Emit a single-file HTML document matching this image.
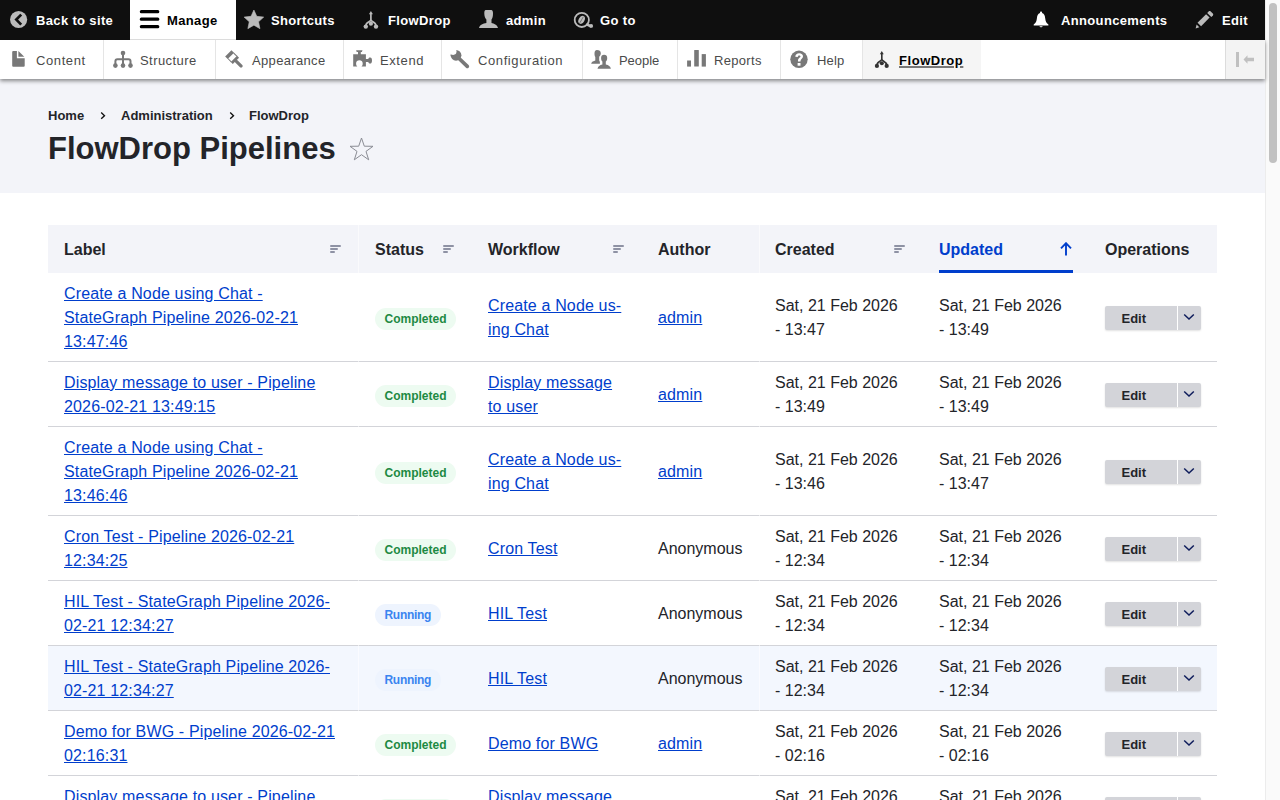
<!DOCTYPE html>
<html><head><meta charset="utf-8">
<style>
*{box-sizing:border-box;margin:0;padding:0}
html,body{width:1280px;height:800px;overflow:hidden;background:#fff}
body{font-family:"Liberation Sans",sans-serif;color:#232429;position:relative}
.abs{position:absolute}
#bar{position:absolute;z-index:10;left:0;top:0;width:1265px;height:40px;background:#0f0f0f}
#bar .t{position:absolute;top:11px;line-height:20px;font-size:13px;font-weight:700;color:#fff;white-space:nowrap;letter-spacing:.35px}
#bar svg{position:absolute}
#manage{position:absolute;left:130px;top:0;width:106px;height:40px;background:#fff;border-bottom:1px solid #dcdcdc}
#tray{position:absolute;z-index:5;left:0;top:40px;width:1265px;height:39px;background:#fff;box-shadow:0 2px 4px rgba(0,0,0,.45)}
#tray .t{position:absolute;top:11px;line-height:20px;font-size:13px;color:#4a4a4a;white-space:nowrap;letter-spacing:.6px}
#tray .d{position:absolute;top:0;width:1px;height:39px;background:#e5e5e5}
#tray svg{position:absolute}
#hdr{position:absolute;left:0;top:79px;width:1265px;height:114px;background:#f3f4f9}
.bc{position:absolute;top:26.5px;line-height:20px;font-size:13px;font-weight:700;color:#232429;white-space:nowrap}
h1{position:absolute;left:48px;top:129px;line-height:40px;font-size:31px;font-weight:700;color:#232429;white-space:nowrap}
#sb{position:absolute;left:1265px;top:0;width:15px;height:800px;background:#fafafa;border-left:1px solid #ececec}
#sb div{position:absolute;left:3px;top:3px;width:8px;height:160px;border-radius:4px;background:#c1c1c1}
table{position:absolute;left:48px;top:225px;width:1169px;border-collapse:collapse;table-layout:fixed}
th{height:48px;background:#f3f4f9;text-align:left;font-size:16px;font-weight:700;line-height:24px;padding:1px 16px 0;vertical-align:middle;position:relative;white-space:nowrap}
td{font-size:16px;line-height:24px;padding:9px 16px 7px;vertical-align:middle;border-bottom:1px solid #d3d4d9}
a{color:#003ecc;text-decoration:underline;text-underline-offset:1px;letter-spacing:.15px}
tr.hov td{background:#f3f7fe}
.srt{position:absolute;top:20px;right:18px;width:11px;height:8px}
.srt i{position:absolute;left:0;height:2px;background:#8e92a4;border-radius:1px}
.badge{display:inline-block;height:22px;line-height:22px;padding:0 9.5px;border-radius:11px;font-size:12px;font-weight:700;vertical-align:middle}
.ok{background:#edfbf1;color:#1d8a43}
.run{background:#eef4fe;color:#3a84f0;letter-spacing:-.3px}
.ops{position:relative;width:96px;height:24px;background:#d3d4d9;border-radius:2px;box-shadow:0 1px 2px rgba(0,0,0,.12);font-size:13px;font-weight:700;line-height:24px}
.ops span{position:absolute;left:16.5px;top:1px}
.ops i{position:absolute;left:72px;top:0;width:1px;height:24px;background:#fff}
.ops svg{position:absolute;left:78px;top:7px}
</style></head><body>
<div id="bar">
  <!-- back to site -->
  <svg style="left:8px;top:9px" width="22" height="22" viewBox="8 9 22 22"><circle cx="18.6" cy="19.5" r="8.6" fill="#bbb"/><path d="M21.2 14.6 L16.3 19.6 L21.2 24.6" stroke="#0f0f0f" stroke-width="2.7" fill="none"/></svg>
  <span class="t" style="left:36px">Back to site</span>
  <div id="manage"></div>
  <svg style="left:138px;top:8px" width="24" height="24" viewBox="138 8 24 24"><rect x="139.8" y="10" width="19.5" height="3.2" rx="1.5" fill="#000"/><rect x="139.8" y="17.5" width="19.5" height="3.2" rx="1.5" fill="#000"/><rect x="139.8" y="25" width="19.5" height="3.2" rx="1.5" fill="#000"/></svg>
  <span class="t" style="left:167px;color:#000">Manage</span>
  <svg style="left:242px;top:8px" width="24" height="24" viewBox="242 8 24 24"><path d="M253.90 10.00 L256.78 16.34 L263.70 17.12 L258.56 21.81 L259.95 28.63 L253.90 25.20 L247.85 28.63 L249.24 21.81 L244.10 17.12 L251.02 16.34Z" fill="#bbb" stroke="#bbb" stroke-width="0.6" stroke-linejoin="round"/></svg>
  <span class="t" style="left:271px">Shortcuts</span>
  <svg style="left:360px;top:8px" width="22" height="24" viewBox="360 8 22 24"><g transform="translate(363.6 11.1) scale(1.0)"><path d="M7.3 2 V9.3" stroke="#bbb" stroke-width="1.7"/><path d="M5.3 3.2 L7.3 0 L9.3 3.2Z" fill="#bbb"/><path d="M7.3 8.6 C7.3 10.8 2.3 10.6 2.3 14.5 M7.3 8.6 C7.3 10.8 12.3 10.6 12.3 14.5" stroke="#bbb" stroke-width="1.7" fill="none"/><circle cx="7.3" cy="12.6" r="2.1" fill="#bbb"/><circle cx="2.2" cy="15.5" r="2.2" fill="#bbb"/><circle cx="12.4" cy="15.5" r="2.2" fill="#bbb"/></g></svg>
  <span class="t" style="left:388px">FlowDrop</span>
  <svg style="left:476px;top:8px" width="24" height="24" viewBox="476 8 24 24"><path d="M485.8 10 H491.2 C492.5 10 493 11.5 493 13.5 C493 16.5 492.4 18.3 491.5 19.4 V23 C494 23.6 497 24.5 498 28 H479 C480 24.5 483 23.6 486.4 23 V19.4 C485.3 18.3 484.3 16.5 484.3 13.5 C484.3 11.5 484.6 10 485.8 10Z" fill="#bbb"/></svg>
  <span class="t" style="left:506px">admin</span>
  <svg style="left:570px;top:8px" width="26" height="24" viewBox="570 8 26 24"><circle cx="581.8" cy="19.9" r="7.1" stroke="#bbb" stroke-width="1.8" fill="none"/><path d="M587.2 24.6 L590.8 26.2" stroke="#bbb" stroke-width="2.6" stroke-linecap="round"/><circle cx="591.2" cy="25.9" r="1.9" fill="#bbb"/><ellipse cx="581.6" cy="19.8" rx="4.3" ry="2.9" transform="rotate(-62 581.6 19.8)" fill="#bbb"/><path d="M579.9 22.8 L583.3 16.8" stroke="#555" stroke-width="0.7"/></svg>
  <span class="t" style="left:600px">Go to</span>
  <svg style="left:1030px;top:8px" width="22" height="24" viewBox="1030 8 22 24"><path d="M1041 11.6 C1041.9 11.6 1042.1 12.3 1042.1 12.9 C1044.3 13.6 1045 15.8 1045.2 18.3 C1045.5 21.5 1046.2 23 1048.4 24.6 V25.5 H1033.7 V24.6 C1035.9 23 1036.6 21.5 1036.9 18.3 C1037.1 15.8 1037.8 13.6 1040 12.9 C1040 12.3 1040.2 11.6 1041 11.6Z" fill="#fff"/><path d="M1039.5 26.3 H1042.6 C1042.4 27.6 1039.7 27.6 1039.5 26.3Z" fill="#fff"/></svg>
  <span class="t" style="left:1061px">Announcements</span>
  <svg style="left:1192px;top:8px" width="24" height="24" viewBox="1192 8 24 24"><path d="M1197.5 22.8 L1206.1 14.2 L1209.6 17.6 L1201.1 26.2Z" fill="#bbb"/><path d="M1207.2 12.9 L1208.6 11.5 C1209.2 10.9 1210.1 10.9 1210.7 11.5 L1212.8 13.6 C1213.4 14.2 1213.4 15.1 1212.8 15.7 L1211.3 17.1Z" fill="#bbb"/><path d="M1195.6 28.4 L1196.6 24.6 L1199.3 27.3Z" fill="#bbb"/></svg>
  <span class="t" style="left:1222px">Edit</span>
</div>
<div id="tray">
  <svg style="left:10px;top:8px" width="18" height="22" viewBox="10 48 18 22"><path d="M12.2 51.9 Q12.2 50.9 13.2 50.9 H16.9 V58.2 H24.7 V65.8 Q24.7 66.8 23.7 66.8 H13.2 Q12.2 66.8 12.2 65.8Z" fill="#787878"/><path d="M18.4 51 L24.3 56.8 H18.4Z" fill="#787878"/></svg>
  <span class="t" style="left:36px">Content</span>
  <div class="d" style="left:103px"></div>
  <svg style="left:111px;top:8px" width="24" height="22" viewBox="111 48 24 22"><circle cx="123" cy="53.1" r="2.3" fill="#787878"/><path d="M123 53.5 V65.6 M115.4 65.6 V61.3 Q115.4 59.3 117.4 59.3 H128.5 Q130.5 59.3 130.5 61.3 V65.6" stroke="#787878" stroke-width="2" fill="none"/><circle cx="115.4" cy="65.6" r="2.3" fill="#787878"/><circle cx="123" cy="65.6" r="2.3" fill="#787878"/><circle cx="130.5" cy="65.6" r="2.3" fill="#787878"/></svg>
  <span class="t" style="left:140px;letter-spacing:0.44px">Structure</span>
  <div class="d" style="left:215px"></div>
  <svg style="left:222px;top:7px" width="24" height="24" viewBox="222 47 24 24"><g transform="translate(228.3 53.3) rotate(-45)"><rect x="-4.45" y="0" width="8.9" height="3.6" fill="#787878"/><rect x="-4.45" y="3.4" width="1" height="5" fill="#787878"/><rect x="3.45" y="3.4" width="1" height="5" fill="#787878"/><rect x="-4.45" y="8" width="8.9" height="2.8" fill="#787878"/><rect x="-1.6" y="10" width="3.2" height="9.6" rx="1.4" fill="#787878"/></g></svg>
  <span class="t" style="left:252px;letter-spacing:0.34px">Appearance</span>
  <div class="d" style="left:343px"></div>
  <svg style="left:350px;top:7px" width="26" height="24" viewBox="350 47 26 24"><path d="M356.1 50.2 H362.5 L361.9 51.9 H360.8 V54.3 H365.9 V59 H368.3 C368.5 57.8 369.3 57.4 370.2 57.4 C371.4 57.4 372 58.6 372 60.4 C372 62.3 371.4 63.5 370.2 63.5 C369.3 63.5 368.5 63 368.3 61.9 H365.9 V66.6 H361.4 C362.4 65.8 362.7 64.7 362.7 63.5 C362.7 61.5 361.3 60.3 359.4 60.3 C357.5 60.3 356.1 61.5 356.1 63.5 C356.1 64.7 356.5 65.8 357.4 66.6 H353.2 V54.3 H358 V51.9 H356.7Z" fill="#787878"/></svg>
  <span class="t" style="left:380px">Extend</span>
  <div class="d" style="left:441px"></div>
  <svg style="left:447px;top:7px" width="26" height="24" viewBox="447 47 26 24"><mask id="wm"><rect x="447" y="47" width="26" height="24" fill="#fff"/><circle cx="453.2" cy="51.6" r="3.3" fill="#000"/></mask><g mask="url(#wm)"><circle cx="456" cy="55.3" r="5.4" fill="#787878"/></g><path d="M457.5 57 L467.3 66.4" stroke="#787878" stroke-width="3.7" stroke-linecap="round"/></svg>
  <span class="t" style="left:478px">Configuration</span>
  <div class="d" style="left:582px"></div>
  <svg style="left:588px;top:7px" width="26" height="24" viewBox="588 47 26 24"><path d="M597 50.1 C599.3 50.1 600.8 51.2 600.8 53.3 C600.8 54.8 600.1 55.9 599.2 56.7 V60.4 C599.7 61.1 599.9 61.8 599.9 62.4 V63.7 H591.2 C591.4 62.4 592.5 61.4 595.3 60.6 V57 C594.6 56 594.5 54.8 594.5 53.5 C594.5 51.5 595.2 50.1 597 50.1Z" fill="#787878"/><path d="M604.1 54.8 C606.1 54.8 607.2 56 607.2 58 C607.2 59.6 606.6 60.9 605.8 61.6 V64.5 C608.7 65.1 610.3 66.2 610.9 68.7 H597.5 C598.1 66.2 599.7 65.1 602.4 64.5 V61.6 C601.6 60.9 601.1 59.6 601.1 58 C601.1 56 602.1 54.8 604.1 54.8Z" fill="#787878"/></svg>
  <span class="t" style="left:619px;letter-spacing:-0.05px">People</span>
  <div class="d" style="left:677px"></div>
  <svg style="left:685px;top:7px" width="24" height="22" viewBox="685 47 24 22"><rect x="687.1" y="60.5" width="3.9" height="6.1" fill="#787878"/><rect x="694.2" y="50.1" width="4.6" height="16.5" rx="0.5" fill="#787878"/><rect x="701.7" y="54.1" width="4.2" height="12.5" fill="#787878"/></svg>
  <span class="t" style="left:714px;letter-spacing:0.31px">Reports</span>
  <div class="d" style="left:780px"></div>
  <svg style="left:788px;top:8px" width="22" height="22" viewBox="788 48 22 22"><circle cx="799" cy="59.3" r="8.7" fill="#787878"/><path d="M795.3 56.8 C795.3 54.6 797 53.3 799.2 53.3 C801.5 53.3 803 54.6 803 56.4 C803 58.6 800.5 58.8 800.5 60.9 V61.6 H798 V60.7 C798 58.2 800.5 57.7 800.5 56.6 C800.5 55.9 800 55.4 799.2 55.4 C798.3 55.4 797.8 56 797.8 56.9Z" fill="#fff"/><rect x="797.6" y="63" width="2.9" height="2.7" fill="#fff"/></svg>
  <span class="t" style="left:817px;letter-spacing:0.16px">Help</span>
  <div class="d" style="left:862px"></div>
  <div style="position:absolute;left:863px;top:0;width:118px;height:39px;background:#f5f5f5"></div>
  <svg style="left:872px;top:8px" width="22" height="22" viewBox="872 48 22 22"><g transform="translate(874.8 51.1) scale(0.96)"><path d="M7.3 2 V9.3" stroke="#333" stroke-width="1.7"/><path d="M5.3 3.2 L7.3 0 L9.3 3.2Z" fill="#333"/><path d="M7.3 8.6 C7.3 10.8 2.3 10.6 2.3 14.5 M7.3 8.6 C7.3 10.8 12.3 10.6 12.3 14.5" stroke="#333" stroke-width="1.7" fill="none"/><circle cx="7.3" cy="12.6" r="2.1" fill="#333"/><circle cx="2.2" cy="15.5" r="2.2" fill="#333"/><circle cx="12.4" cy="15.5" r="2.2" fill="#333"/></g></svg>
  <span class="t" style="left:899px;color:#000;font-weight:700;text-decoration:underline;text-decoration-color:#777;text-decoration-thickness:1.6px;letter-spacing:.55px">FlowDrop</span>
  <div style="position:absolute;left:1225px;top:0;width:40px;height:39px;background:#f3f3f3;border-left:1px solid #dcdcdc"></div>
  <svg style="left:1235px;top:12px" width="20" height="16" viewBox="0 0 20 16"><rect x="1" y="0" width="3" height="15" fill="#c0c0c0"/><path d="M8.5 7.5 L12.5 3.3 V5.8 H19 V9.2 H12.5 V11.7Z" fill="#c0c0c0"/></svg>
</div>
<div id="hdr">
  <span class="bc" style="left:48px">Home</span>
  <svg style="position:absolute;left:100px;top:33px" width="6" height="8" viewBox="0 0 6 8"><path d="M1.2 0.6 L4.5 3.7 L1.2 6.8" stroke="#111" stroke-width="1.35" fill="none"/></svg>
  <span class="bc" style="left:121px">Administration</span>
  <svg style="position:absolute;left:229px;top:33px" width="6" height="8" viewBox="0 0 6 8"><path d="M1.2 0.6 L4.5 3.7 L1.2 6.8" stroke="#111" stroke-width="1.35" fill="none"/></svg>
  <span class="bc" style="left:249px">FlowDrop</span>
</div>
<h1>FlowDrop Pipelines</h1>
<svg class="abs" style="left:349px;top:137px" width="25" height="24" viewBox="0 0 25 24"><path d="M12.5 1 L15.3 9.2 L24 9.3 L17 14.4 L19.7 22.8 L12.5 17.7 L5.3 22.8 L8 14.4 L1 9.3 L9.7 9.2Z" fill="none" stroke="#8a8c94" stroke-width="1"/></svg>

<table>
<colgroup><col style="width:311px"><col style="width:113px"><col style="width:170px"><col style="width:117px"><col style="width:164px"><col style="width:166px"><col style="width:128px"></colgroup>
<thead><tr>
<th>Label<div class="srt"><i style="top:0;width:11px"></i><i style="top:3px;width:8px"></i><i style="top:6px;width:5px"></i></div></th>
<th>Status<div class="srt"><i style="top:0;width:11px"></i><i style="top:3px;width:8px"></i><i style="top:6px;width:5px"></i></div></th>
<th>Workflow<div class="srt"><i style="top:0;width:11px"></i><i style="top:3px;width:8px"></i><i style="top:6px;width:5px"></i></div></th>
<th>Author</th>
<th>Created<div class="srt"><i style="top:0;width:11px"></i><i style="top:3px;width:8px"></i><i style="top:6px;width:5px"></i></div></th>
<th style="color:#003ecc">Updated<svg style="position:absolute;right:17px;top:17px" width="12" height="14" viewBox="0 0 12 14"><path d="M6 13.5 V1.5 M1 6.3 L6 1.2 L11 6.3" stroke="#003ecc" stroke-width="1.9" fill="none"/></svg><div style="position:absolute;left:16px;right:16px;bottom:0;height:3px;background:#003ecc"></div></th>
<th>Operations</th>
</tr></thead>
<tbody>
<tr><td><a>Create a Node using Chat -<br>StateGraph Pipeline 2026-02-21<br>13:47:46</a></td><td><span class="badge ok">Completed</span></td><td><a>Create a Node us-<br>ing Chat</a></td><td><a>admin</a></td><td>Sat, 21 Feb 2026<br>- 13:47</td><td>Sat, 21 Feb 2026<br>- 13:49</td><td><div class="ops"><span>Edit</span><i></i><svg width="12" height="8" viewBox="0 0 12 8"><path d="M1.2 1.5 L6 6 L10.8 1.5" stroke="#0f1d5c" stroke-width="1.5" fill="none"/></svg></div></td></tr>
<tr><td><a>Display message to user - Pipeline<br>2026-02-21 13:49:15</a></td><td><span class="badge ok">Completed</span></td><td><a>Display message<br>to user</a></td><td><a>admin</a></td><td>Sat, 21 Feb 2026<br>- 13:49</td><td>Sat, 21 Feb 2026<br>- 13:49</td><td><div class="ops"><span>Edit</span><i></i><svg width="12" height="8" viewBox="0 0 12 8"><path d="M1.2 1.5 L6 6 L10.8 1.5" stroke="#0f1d5c" stroke-width="1.5" fill="none"/></svg></div></td></tr>
<tr><td><a>Create a Node using Chat -<br>StateGraph Pipeline 2026-02-21<br>13:46:46</a></td><td><span class="badge ok">Completed</span></td><td><a>Create a Node us-<br>ing Chat</a></td><td><a>admin</a></td><td>Sat, 21 Feb 2026<br>- 13:46</td><td>Sat, 21 Feb 2026<br>- 13:47</td><td><div class="ops"><span>Edit</span><i></i><svg width="12" height="8" viewBox="0 0 12 8"><path d="M1.2 1.5 L6 6 L10.8 1.5" stroke="#0f1d5c" stroke-width="1.5" fill="none"/></svg></div></td></tr>
<tr><td><a>Cron Test - Pipeline 2026-02-21<br>12:34:25</a></td><td><span class="badge ok">Completed</span></td><td><a>Cron Test</a></td><td>Anonymous</td><td>Sat, 21 Feb 2026<br>- 12:34</td><td>Sat, 21 Feb 2026<br>- 12:34</td><td><div class="ops"><span>Edit</span><i></i><svg width="12" height="8" viewBox="0 0 12 8"><path d="M1.2 1.5 L6 6 L10.8 1.5" stroke="#0f1d5c" stroke-width="1.5" fill="none"/></svg></div></td></tr>
<tr><td><a>HIL Test - StateGraph Pipeline 2026-<br>02-21 12:34:27</a></td><td><span class="badge run">Running</span></td><td><a>HIL Test</a></td><td>Anonymous</td><td>Sat, 21 Feb 2026<br>- 12:34</td><td>Sat, 21 Feb 2026<br>- 12:34</td><td><div class="ops"><span>Edit</span><i></i><svg width="12" height="8" viewBox="0 0 12 8"><path d="M1.2 1.5 L6 6 L10.8 1.5" stroke="#0f1d5c" stroke-width="1.5" fill="none"/></svg></div></td></tr>
<tr class="hov"><td><a>HIL Test - StateGraph Pipeline 2026-<br>02-21 12:34:27</a></td><td><span class="badge run">Running</span></td><td><a>HIL Test</a></td><td>Anonymous</td><td>Sat, 21 Feb 2026<br>- 12:34</td><td>Sat, 21 Feb 2026<br>- 12:34</td><td><div class="ops"><span>Edit</span><i></i><svg width="12" height="8" viewBox="0 0 12 8"><path d="M1.2 1.5 L6 6 L10.8 1.5" stroke="#0f1d5c" stroke-width="1.5" fill="none"/></svg></div></td></tr>
<tr><td><a>Demo for BWG - Pipeline 2026-02-21<br>02:16:31</a></td><td><span class="badge ok">Completed</span></td><td><a>Demo for BWG</a></td><td><a>admin</a></td><td>Sat, 21 Feb 2026<br>- 02:16</td><td>Sat, 21 Feb 2026<br>- 02:16</td><td><div class="ops"><span>Edit</span><i></i><svg width="12" height="8" viewBox="0 0 12 8"><path d="M1.2 1.5 L6 6 L10.8 1.5" stroke="#0f1d5c" stroke-width="1.5" fill="none"/></svg></div></td></tr>
<tr><td><a>Display message to user - Pipeline<br>2026-02-21 02:17:02</a></td><td><span class="badge ok">Completed</span></td><td><a>Display message<br>to user</a></td><td><a>admin</a></td><td>Sat, 21 Feb 2026<br>- 02:17</td><td>Sat, 21 Feb 2026<br>- 02:17</td><td><div class="ops"><span>Edit</span><i></i><svg width="12" height="8" viewBox="0 0 12 8"><path d="M1.2 1.5 L6 6 L10.8 1.5" stroke="#0f1d5c" stroke-width="1.5" fill="none"/></svg></div></td></tr>
</tbody>
</table>
<div class="abs" style="left:358px;top:225px;width:1px;height:575px;background:rgba(255,255,255,.55)"></div>
<div class="abs" style="left:759px;top:225px;width:1px;height:575px;background:rgba(255,255,255,.55)"></div>
<div id="sb"><div></div></div>
</body></html>
